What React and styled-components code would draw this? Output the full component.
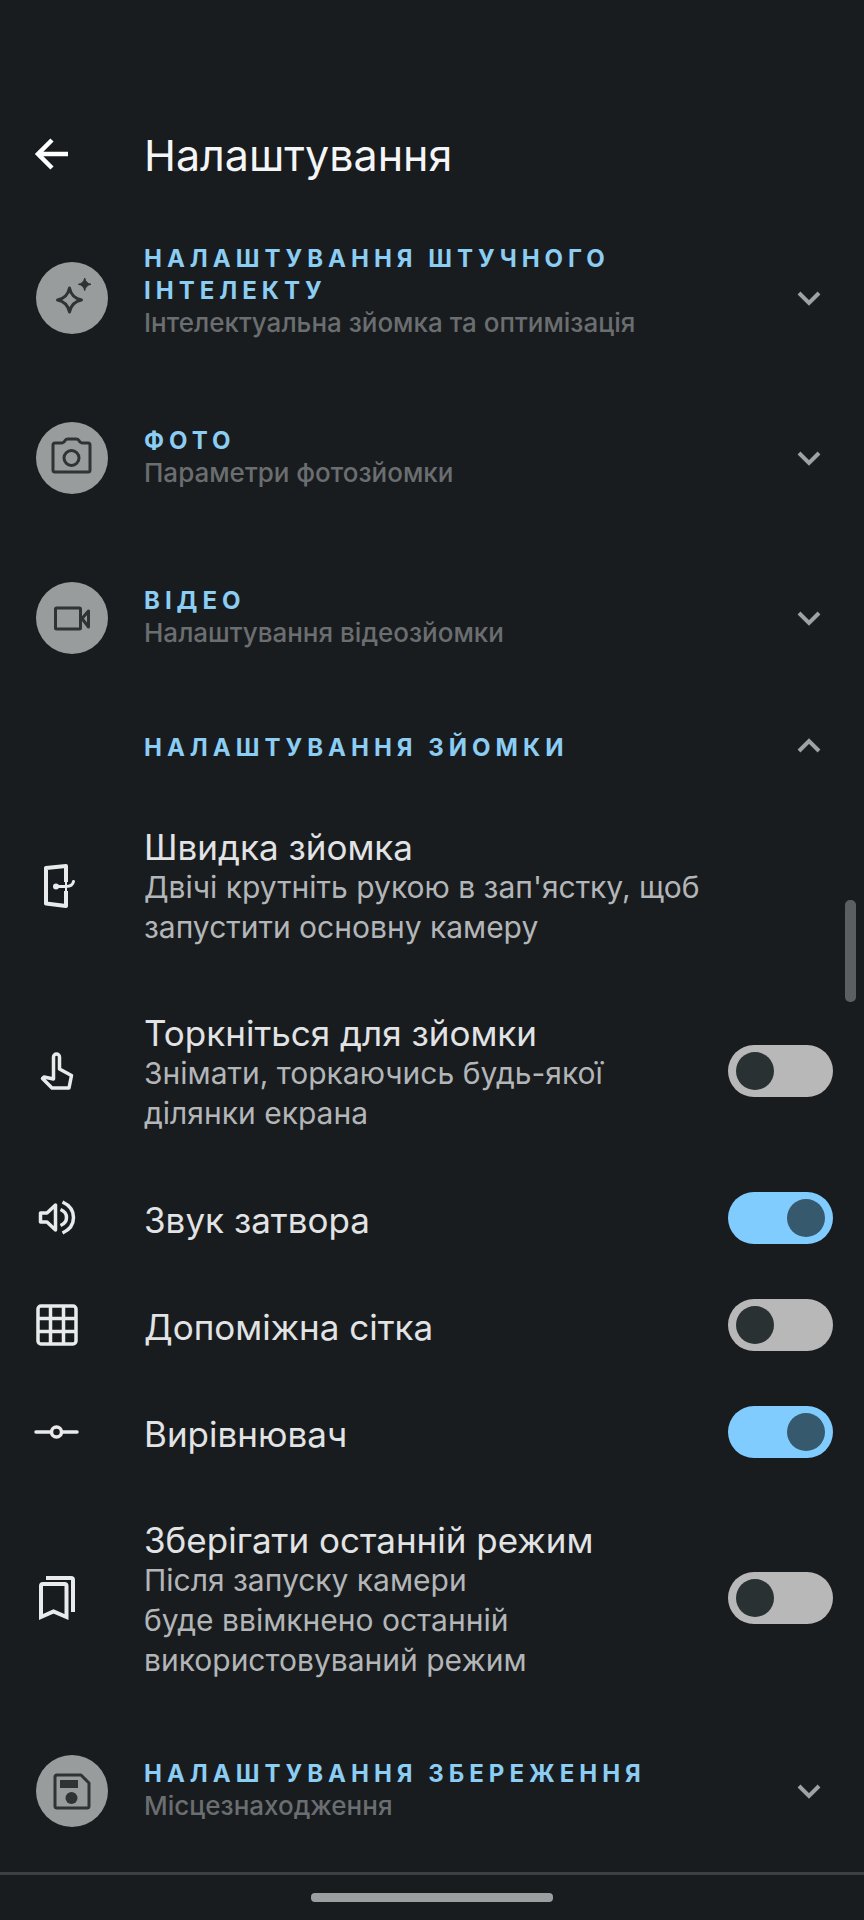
import React, { useState } from "react";
import styled, { createGlobalStyle } from "styled-components";

const GlobalStyle = createGlobalStyle`
  * {
    box-sizing: border-box;
  }
  body {
    margin: 0;
    background-color: #191c1e;
    font-family: Inter, "Noto Sans", sans-serif;
  }
  button {
    font: inherit;
    color: inherit;
    text-align: left;
    background: none;
    border: none;
    cursor: pointer;
  }
`;

const Page = styled.div`
  position: relative;
  display: flex;
  flex-direction: column;
  min-height: 100vh;
  padding-top: 92px;
  color: #e1e3e5;
`;

const AppBar = styled.header`
  display: flex;
  align-items: center;
  height: 126px;
  padding: 0 32px;
`;

const BackButton = styled.button`
  display: flex;
  width: 112px;
  padding: 0;
  color: #ffffff;
`;

const PageTitle = styled.h1`
  margin: 0;
  color: #f4f5f6;
  font-size: 43px;
  line-height: 48px;
  font-weight: 400;
`;

const List = styled.main`
  flex: 1;
`;

const SectionHeader = styled.button`
  display: flex;
  align-items: center;
  width: 100%;
  min-height: ${(props) => (props.$compact ? "94px" : "160px")};
  padding: 0 31px 0 36px;
`;

const SectionIcon = styled.span`
  display: flex;
  flex: none;
  width: 72px;
  height: 72px;
  margin-right: 36px;
  border-radius: 50%;
  color: #303335;
  background-color: ${(props) => (props.$empty ? "transparent" : "#999c9d")};
`;

const SectionText = styled.span`
  display: flex;
  flex: 1;
  flex-direction: column;
  padding-top: ${(props) => (props.$compact ? "6px" : "0")};
  padding-bottom: ${(props) => {
    if (props.$compact) return "0";
    return props.$raised ? "14px" : "2px";
  }};
`;

const SectionTitle = styled.span`
  color: #8bcdf3;
  font-size: 24px;
  line-height: 32px;
  font-weight: 700;
  letter-spacing: 5px;
  text-transform: uppercase;
  white-space: pre-line;
`;

const SectionHint = styled.span`
  color: #6b6e70;
  font-size: 26px;
  line-height: 32px;
  font-weight: 500;
`;

const Row = styled.div`
  display: flex;
  align-items: center;
  width: 100%;
  min-height: 107px;
  padding: 0 31px 0 32px;
  cursor: pointer;
`;

const RowIcon = styled.span`
  display: flex;
  flex: none;
  width: 112px;
  color: #e8eaeb;
`;

const RowText = styled.span`
  display: flex;
  flex: 1;
  flex-direction: column;
  padding: 35px 0 31px;
`;

const RowTitle = styled.span`
  font-size: 35px;
  line-height: 40px;
`;

const RowHint = styled.span`
  color: #b3b6b8;
  font-size: 30px;
  line-height: 40px;
  white-space: pre-line;
`;

const Switch = styled.input`
  appearance: none;
  display: flex;
  align-items: center;
  flex: none;
  width: 105px;
  height: 52px;
  margin: 0;
  padding: 0 8px;
  border-radius: 26px;
  background-color: #b8b8b8;
  cursor: pointer;

  &::before {
    content: "";
    width: 38px;
    height: 38px;
    border-radius: 50%;
    background-color: #2a3133;
  }

  &:checked {
    justify-content: flex-end;
    background-color: #80ccff;
  }

  &:checked::before {
    background-color: #36596d;
  }
`;

const ScrollThumb = styled.div`
  position: absolute;
  top: 900px;
  right: 8px;
  width: 11px;
  height: 102px;
  border-radius: 5px;
  background-color: #5c5f61;
`;

const NavBar = styled.footer`
  display: flex;
  align-items: center;
  justify-content: center;
  height: 48px;
  border-top: 3px solid #3d4042;
`;

const NavHandle = styled.div`
  width: 28%;
  height: 9px;
  border-radius: 4px;
  background-color: #9c9fa0;
`;

const Glyph = ({ size = 48, width = 3, children }) => (
  <svg
    width={size}
    height={size}
    viewBox={`0 0 ${size} ${size}`}
    fill="none"
    stroke="currentColor"
    strokeWidth={width}
    strokeLinejoin="round"
    aria-hidden="true"
  >
    {children}
  </svg>
);

const Chevron = ({ up }) => (
  <svg
    width="48"
    height="48"
    viewBox="0 0 48 48"
    fill="none"
    stroke="#9fa2a4"
    strokeWidth="4"
    aria-hidden="true"
  >
    <path d={up ? "M14 30 L24 20 L34 30" : "M14 19 L24 29 L34 19"} />
  </svg>
);

const icons = {
  ai: (
    <Glyph size={72}>
      <path d="M33.5 26 Q35.5 36 45.5 38 Q35.5 40 33.5 50 Q31.5 40 21.5 38 Q31.5 36 33.5 26 Z" />
      <path
        d="M48.7 16 Q49.7 21.3 55 22.3 Q49.7 23.3 48.7 28.6 Q47.7 23.3 42.4 22.3 Q47.7 21.3 48.7 16 Z"
        fill="currentColor"
        strokeWidth="1"
      />
    </Glyph>
  ),
  photo: (
    <Glyph size={72}>
      <path d="M19 21 H25 Q28 21 29 18.5 Q30 17 32 17 H40 Q42 17 43 18.5 Q44 21 47 21 H52 Q54 21 54 23 V48 Q54 50 52 50 H19 Q17 50 17 48 V23 Q17 21 19 21 Z" />
      <circle cx="35.5" cy="36" r="7.5" />
    </Glyph>
  ),
  video: (
    <Glyph size={72}>
      <rect x="19.5" y="26" width="25" height="21" rx="1" />
      <path d="M46 36.5 L52.5 29 V45 Z" />
    </Glyph>
  ),
  storage: (
    <Glyph size={72}>
      <path d="M21 20 H45 L53 28 V51 Q53 53 51 53 H21 Q19 53 19 51 V22 Q19 20 21 20 Z" />
      <rect x="24" y="25" width="18" height="8" fill="currentColor" stroke="none" />
      <circle cx="35.5" cy="43" r="6" fill="currentColor" stroke="none" />
    </Glyph>
  ),
  door: (
    <Glyph width={4}>
      <path d="M34 21 V5 L14 7 V42.5 L34 45 V30" />
      <path
        d="M24 25.5 H34 Q40.5 25.5 41.5 20.5"
        strokeLinecap="round"
        strokeWidth="3"
      />
      <path d="M34 20 V31" strokeWidth="2" />
      <circle cx="24" cy="25.5" r="3" fill="currentColor" stroke="none" />
    </Glyph>
  ),
  touch: (
    <Glyph width={3.5}>
      <path d="M21.5 32 V10 A3 3 0 0 1 27.5 10 V22 L39.5 28.5 L37 41 H20 L10.5 31.5 L12 30 Z" />
    </Glyph>
  ),
  sound: (
    <Glyph width={3.5}>
      <path d="M8.5 19 H15 L23.5 11 V36 L15 28 H8.5 Z" />
      <path d="M28.5 15.5 Q34.5 18 34.5 23.5 Q34.5 29 28.5 31.5" />
      <path d="M30.5 8 Q41.5 13 41.5 23.5 Q41.5 34 30.5 39" />
    </Glyph>
  ),
  grid: (
    <Glyph width={3.5}>
      <rect x="6" y="5" width="38" height="38" rx="3" />
      <path d="M18.5 5 V43 M31.5 5 V43 M6 17.5 H44 M6 30.5 H44" />
    </Glyph>
  ),
  level: (
    <Glyph width={3.5}>
      <path d="M4 24 H19 M30 24 H45" strokeLinecap="round" />
      <circle cx="24.5" cy="24" r="5" />
    </Glyph>
  ),
  bookmarks: (
    <Glyph width={4}>
      <path
        d="M9 43 V12 Q9 10 11 10 H32.5 Q34.5 10 34.5 12 V43 L21.5 37.5 Z"
        strokeLinejoin="miter"
      />
      <path d="M14 4 H39 Q41 4 41 6 V38" />
    </Glyph>
  ),
};

const Section = ({ icon, title, hint, raised, open, onClick }) => (
  <SectionHeader
    type="button"
    $compact={!icon}
    aria-expanded={Boolean(open)}
    onClick={onClick}
  >
    <SectionIcon $empty={!icon}>{icons[icon]}</SectionIcon>
    <SectionText $compact={!icon} $raised={raised}>
      <SectionTitle>{title}</SectionTitle>
      {hint && <SectionHint>{hint}</SectionHint>}
    </SectionText>
    <Chevron up={open} />
  </SectionHeader>
);

const ToggleRow = ({ id, icon, title, hint, on }) => (
  <Row as="label" htmlFor={id}>
    <RowIcon>{icons[icon]}</RowIcon>
    <RowText>
      <RowTitle>{title}</RowTitle>
      {hint && <RowHint>{hint}</RowHint>}
    </RowText>
    <Switch id={id} type="checkbox" defaultChecked={on} />
  </Row>
);

const App = () => {
  const [open, setOpen] = useState(true);

  return (
    <>
      <GlobalStyle />
      <Page>
        <AppBar>
          <BackButton type="button" aria-label="Назад">
            <Glyph width={4.5}>
              <path
                d="M36 23 H6 M20 9 L6 23 L20 37"
                strokeLinejoin="miter"
              />
            </Glyph>
          </BackButton>
          <PageTitle>Налаштування</PageTitle>
        </AppBar>
        <List>
          <Section
            icon="ai"
            title={"Налаштування штучного\nінтелекту"}
            hint="Інтелектуальна зйомка та оптимізація"
            raised
          />
          <Section icon="photo" title="Фото" hint="Параметри фотозйомки" />
          <Section icon="video" title="Відео" hint="Налаштування відеозйомки" />
          <Section
            title="Налаштування зйомки"
            open={open}
            onClick={() => setOpen(!open)}
          />
          {open && (
            <>
              <Row as="button" type="button">
                <RowIcon>{icons.door}</RowIcon>
                <RowText>
                  <RowTitle>Швидка зйомка</RowTitle>
                  <RowHint>
                    {"Двічі крутніть рукою в зап'ястку, щоб\nзапустити основну камеру"}
                  </RowHint>
                </RowText>
              </Row>
              <ToggleRow
                id="touch"
                icon="touch"
                title="Торкніться для зйомки"
                hint={"Знімати, торкаючись будь-якої\nділянки екрана"}
              />
              <ToggleRow id="sound" icon="sound" title="Звук затвора" on />
              <ToggleRow id="grid" icon="grid" title="Допоміжна сітка" />
              <ToggleRow id="level" icon="level" title="Вирівнювач" on />
              <ToggleRow
                id="mode"
                icon="bookmarks"
                title="Зберігати останній режим"
                hint={
                  "Після запуску камери\nбуде ввімкнено останній\nвикористовуваний режим"
                }
              />
            </>
          )}
          <Section
            icon="storage"
            title="Налаштування збереження"
            hint="Місцезнаходження"
          />
        </List>
        <NavBar>
          <NavHandle />
        </NavBar>
        <ScrollThumb />
      </Page>
    </>
  );
};

export default App;
